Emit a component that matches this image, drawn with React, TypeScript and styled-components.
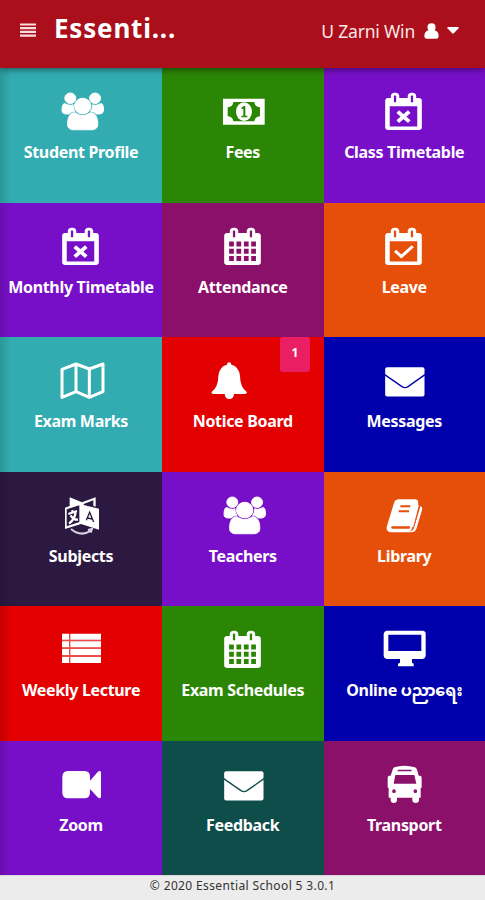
import React from 'react';
import styled, { createGlobalStyle } from 'styled-components';

const GlobalStyle = createGlobalStyle`
  * { box-sizing: border-box; }
  body { margin: 0; background: #ececec; font-family: "Noto Sans", "Open Sans", sans-serif; }
`;

const Page = styled.div`
  width: 485px;
  height: 900px;
  display: grid;
  grid-template-rows: 68px 807px 25px;
  overflow: hidden;
`;

const Header = styled.header`
  position: relative;
  z-index: 2;
  display: flex;
  align-items: center;
  padding: 0 26px 0 20px;
  background: #aa0f1b;
  color: #fff;
  box-shadow: 0 1px 7px rgba(0, 0, 0, 0.55);
`;

const MenuButton = styled.button`
  display: flex;
  width: 16px;
  height: 14px;
  margin-top: -9px;
  padding: 0;
  border: 0;
  background: none;
`;

const Brand = styled.h1`
  margin: -13px 0 0 18px;
  width: 124px;
  font: 700 26px/36px "Noto Sans", sans-serif;
  letter-spacing: 0.8px;
  white-space: nowrap;
`;

const Account = styled.div`
  display: flex;
  align-items: center;
  margin: -7px 0 0 auto;
  color: #fbe6e6;
`;

const AccountName = styled.span`
  font: 400 17.5px/24px "Noto Sans", sans-serif;
  letter-spacing: -0.2px;
  white-space: nowrap;
`;

const UserIcon = styled.svg`
  width: 15px;
  height: 16px;
  margin-left: 9px;
  fill: #fff;
`;

const Caret = styled.svg`
  width: 12px;
  height: 7px;
  margin-left: 8px;
  fill: #fff;
`;

const TileGrid = styled.main`
  position: relative;
  display: grid;
  grid-template-columns: 162px 161.5px 161.5px;
  grid-template-rows: repeat(6, 134.5px);
  &::before {
    content: "";
    position: absolute;
    z-index: 1;
    inset: 0 auto 0 0;
    width: 11px;
    background: linear-gradient(90deg, rgba(0, 0, 0, 0.13), transparent);
  }
`;

const Tile = styled.a<{ $bg: string }>`
  position: relative;
  display: flex;
  flex-direction: column;
  align-items: center;
  padding-top: 24px;
  background: ${(p) => p.$bg};
  color: #fff;
`;

const TileIcon = styled.svg`
  width: 48px;
  height: 40px;
  flex: none;
  overflow: visible;
  fill: #fff;
`;

const Label = styled.span`
  margin-top: 8px;
  font: 700 16px/24px "Noto Sans", "Noto Sans Myanmar", Padauk, sans-serif;
  letter-spacing: -0.32px;
  white-space: nowrap;
`;

const Badge = styled.span`
  position: absolute;
  top: 0;
  right: 13.5px;
  width: 30px;
  height: 34.5px;
  border-radius: 3px;
  background: #e91e63;
  font: 700 12px/32px "Noto Sans", sans-serif;
  text-align: center;
`;

const Footer = styled.footer`
  display: flex;
  justify-content: center;
  border-top: 1px solid #d8d8d8;
  background: #ececec;
  color: #333;
  font: 400 12px/20px "Noto Sans", sans-serif;
  letter-spacing: 0.37px;
`;

const CALENDAR_BODY =
  'M500 430v-260q0-14-9-23t-23-9h-40q-14 0-23 9t-9 23v260q0 14 9 23t23 9h40q14 0 23-9t9-23zm768 0v-260q0-14-9-23t-23-9h-40q-14 0-23 9t-9 23v260q0 14 9 23t23 9h40q14 0 23-9t9-23zM1664 384v1280q0 52-38 90t-90 38h-1408q-52 0-90-38t-38-90v-1280q0-52 38-90t90-38h128v-96q0-66 47-113t113-47h64q66 0 113 47t47 113v96h384v-96q0-66 47-113t113-47h64q66 0 113 47t47 113v96h128q52 0 90 38t38 90z';

const Calendar = ({ kind }: { kind: 'x' | 'check' | 'grid' }) => {
  const cells = [225, 557, 895, 1227]
    .map((x) => [660, 1005, 1350].map((y) => `M${x} ${y}h215v245h-215z`).join(''))
    .join('');
  const hole = kind === 'grid' ? cells : 'M208 650h1248v970h-1248z';
  return (
    <g transform="translate(15.5 2) scale(.0661 .0627)">
      <path fillRule="evenodd" d={CALENDAR_BODY + hole} />
      {kind === 'x' && <path d="M570 905L1094 1385M1094 905L570 1385" fill="none" stroke="#fff" strokeWidth="175" />}
      {kind === 'check' && <path d="M450 1110L735 1380L1250 890" fill="none" stroke="#fff" strokeWidth="145" />}
    </g>
  );
};

const Users = () => (
  <g transform="translate(11 3) scale(.0645 .0615)" stroke="#fff" strokeWidth="45">
    <path d="M657 896q-162 5-265 128h-134q-82 0-138-40.5t-56-118.5q0-353 124-353 6 0 43.5 21t97.5 42.5 119 21.5q67 0 133-23-5 37-5 66 0 159 93 256zm1071 637q0 120-73 189.5t-194 69.5h-874q-121 0-194-69.5t-73-189.5q0-53 3.5-103.5t14-109 26.5-108.5 43-97.5 62-81 85.5-53.5 111.5-20q10 0 43 21.5t73 48 107 48 135 21.5 135-21.5 107-48 73-48 43-21.5q61 0 111.5 20t85.5 53.5 62 81 43 97.5 26.5 108.5 14 109 3.5 103.5zm-1024-1277q0 106-75 181t-181 75-181-75-75-181 75-181 181-75 181 75 75 181zm704 384q0 159-112.5 271.5t-271.5 112.5-271.5-112.5-112.5-271.5 112.5-271.5 271.5-112.5 271.5 112.5 112.5 271.5zm576 225q0 78-56 118.5t-138 40.5h-134q-103-123-265-128 93-97 93-256 0-29-5-66 66 23 133 23 59 0 119-21.5t97.5-42.5 43.5-21q124 0 124 353zm-128-609q0 106-75 181t-181 75-181-75-75-181 75-181 181-75 181 75 75 181z" />
  </g>
);

const Money = () => (
  <g>
    <path fillRule="evenodd" d="M12 20H137V98H12ZM43 30Q42 45 26 46V73Q42 74 43 88H106Q107 74 123 73V46Q107 45 106 30Z" />
    <ellipse cx="75" cy="59" rx="24" ry="28" />
    <path d="M67 48L74 42H79V71H85V76H67V71H73V50L69 52Z" fill="#2b8605" />
  </g>
);

const MapFold = () => (
  <path fill="none" stroke="#fff" strokeWidth="9" strokeLinejoin="round" d="M15 25L57 9L97 24L138 9V92L97 109L57 92L15 109ZM57 9V92M97 24V109" />
);

const Bell = () => (
  <path d="M30 4Q37 4 37 11Q60 16 63 45Q63 78 84 94Q84 98 79 99H45Q44 114 31 114Q18 114 17 99H-18Q-23 98-23 94Q-2 78-2 45Q1 16 24 11Q24 4 30 4Z" />
);

const Envelope = ({ line }: { line: string }) => (
  <g>
    <rect x="15.500" y="18.500" width="118" height="88" rx="6" />
    <path d="M14 41L66 77Q75 83 84 77L135 41" fill="none" stroke={line} strokeWidth="4" />
  </g>
);

const Language = () => (
  <g>
    <path d="M38 4L75 19L116 4V32L109 29V13L80 24V27L126 38V101L72 84L24 99V35L38 30Z" />
    <path d="M29 40L67 28V78L29 91Z" fill="#2c1942" />
    <path d="M34 54L60 45M45 43L48 50M56 47Q54 70 36 83M41 58Q49 72 63 71" stroke="#fff" strokeWidth="7" fill="none" />
    <path d="M88 73L98 49L110 78M92 66L105 69" stroke="#2c1942" strokeWidth="4" fill="none" />
    <path d="M42 99Q72 124 101 104M93 102L105 99L101 110" stroke="#d8d0e0" strokeWidth="6" fill="none" />
  </g>
);

const Book = () => (
  <g>
    <path d="M55 10H107Q117 12 114 24L97 92Q94 109 82 109H34Q18 108 20 94L41 24Q44 11 55 10Z" />
    <path d="M121 31Q129 32 126 42L110 96Q106 109 94 109H82Q98 107 102 93Z" />
    <path d="M114 26L97 93" stroke="#fff" strokeWidth="6" />
    <path d="M61 31H91M56 46H87" stroke="#e64f0a" strokeWidth="6" />
    <path d="M35 91H91L88 98H37Q31 97 35 91Z" fill="#e64f0a" />
    <path d="M119 31L101 95Q98 102 95 104" fill="none" stroke="#e64f0a" strokeWidth="2.500" />
  </g>
);

const List = () => (
  <g>
    {[11, 34, 57, 81].map((y) => (
      <path key={y} d={`M15 ${y}h21v18h-21zM40 ${y}h92v18h-92z`} />
    ))}
    <path d="M36 11h4v88h-4zM15 29h117v5h-117zM15 52h117v5h-117zM15 75h117v6h-117z" fillOpacity=".3" />
  </g>
);

const Desktop = () => (
  <path fillRule="evenodd" d="M20 2H128Q137 3 137 11V78Q136 86 128 87H96V98L101 101V109H54V101L60 98V87H20Q12 86 11 78V11Q12 3 20 2ZM25 14V63H124V14Z" />
);

const Video = () => (
  <path d="M32 18H83Q99 19 99 35V47L122 21Q130 15 132 22V96Q130 103 122 97L99 72V83Q98 100 83 100H32Q16 99 16 83V35Q17 19 32 18Z" />
);

const Bus = () => (
  <path fillRule="evenodd" d="M43 7Q72-2 105 7Q111 10 113 20L116 32H121Q125 33 125 40V68H122V98H117V106Q116 114 107 114Q98 114 97 106V98H51V106Q50 114 41 114Q33 114 32 106V98H26V68H23V40Q23 33 27 32H32L36 20Q38 9 43 7ZM54 14Q52 15 53 19H94Q97 17 94 14ZM46 30L41 56H109L103 30ZM42 73A5.500 5.500 0 1 0 42 84A5.500 5.500 0 1 0 42 73ZM106 73A5.500 5.500 0 1 0 106 84A5.500 5.500 0 1 0 106 73Z" />
);

const teal = '#32acb1', green = '#2b8605', violet = '#780fc8', plum = '#8a1069';
const orange = '#e64f0a', red = '#e30000', blue = '#0000ad', ink = '#2c1942', pine = '#0f4d4a';

type Item = { label: string; bg: string; icon: React.ReactNode; badge?: string };

const items: Item[] = [
  { label: 'Student Profile', bg: teal, icon: <Users /> },
  { label: 'Fees', bg: green, icon: <Money /> },
  { label: 'Class Timetable', bg: violet, icon: <Calendar kind="x" /> },
  { label: 'Monthly Timetable', bg: violet, icon: <Calendar kind="x" /> },
  { label: 'Attendance', bg: plum, icon: <Calendar kind="grid" /> },
  { label: 'Leave', bg: orange, icon: <Calendar kind="check" /> },
  { label: 'Exam Marks', bg: teal, icon: <MapFold /> },
  { label: 'Notice Board', bg: red, icon: <Bell />, badge: '1' },
  { label: 'Messages', bg: blue, icon: <Envelope line={blue} /> },
  { label: 'Subjects', bg: ink, icon: <Language /> },
  { label: 'Teachers', bg: violet, icon: <Users /> },
  { label: 'Library', bg: orange, icon: <Book /> },
  { label: 'Weekly Lecture', bg: red, icon: <List /> },
  { label: 'Exam Schedules', bg: green, icon: <Calendar kind="grid" /> },
  { label: 'Online ပညာရေး', bg: blue, icon: <Desktop /> },
  { label: 'Zoom', bg: violet, icon: <Video /> },
  { label: 'Feedback', bg: pine, icon: <Envelope line={pine} /> },
  { label: 'Transport', bg: plum, icon: <Bus /> },
];

export default function App() {
  return (
    <>
      <GlobalStyle />
      <Page>
        <Header>
          <MenuButton aria-label="Menu">
            <svg width="16" height="14" viewBox="0 0 16 14">
              <path d="M0 1.500H16M0 5.200H16M0 8.900H16M0 12.600H16" stroke="#f8dede" strokeWidth="2.200" />
            </svg>
          </MenuButton>
          <Brand>Essenti...</Brand>
          <Account>
            <AccountName>U Zarni Win</AccountName>
            <UserIcon viewBox="0 0 48 51">
              <path d="M24 1A13 13 0 0 1 37 14Q37 19 34 23Q47 26 47 43Q46 50 39 50H9Q2 50 1 43Q1 26 14 23Q11 19 11 14A13 13 0 0 1 24 1Z" />
            </UserIcon>
            <Caret viewBox="0 0 12 7">
              <path d="M1 0H11Q12 .5 11.500 1.300L6.800 6.300Q6 7 5.200 6.300L.5 1.300Q0 .5 1 0Z" />
            </Caret>
          </Account>
        </Header>
        <TileGrid>
          {items.map((it) => (
            <Tile key={it.label} $bg={it.bg}>
              <TileIcon viewBox="0 0 144 120">{it.icon}</TileIcon>
              <Label>{it.label}</Label>
              {it.badge && <Badge>{it.badge}</Badge>}
            </Tile>
          ))}
        </TileGrid>
        <Footer>© 2020 Essential School 5 3.0.1</Footer>
      </Page>
    </>
  );
}
